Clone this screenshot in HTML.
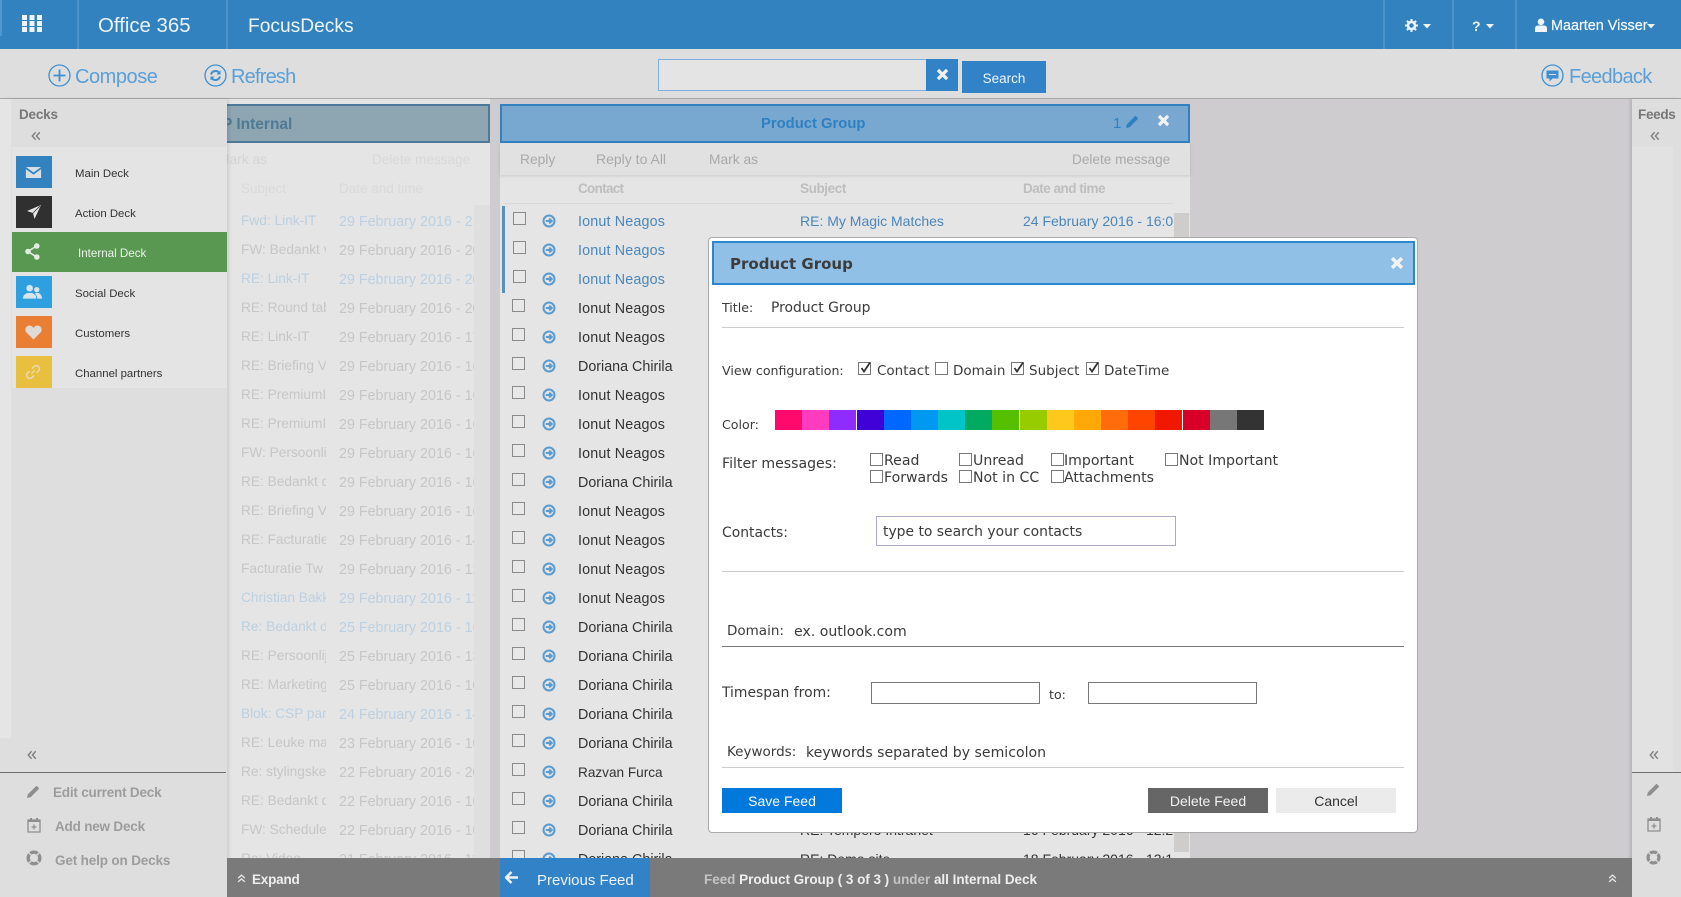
<!DOCTYPE html>
<html><head><meta charset="utf-8"><title>FocusDecks</title>
<style>
*{box-sizing:border-box}
html,body{margin:0;padding:0}
body{width:1681px;height:897px;overflow:hidden;position:relative;background:#cecccf;font-family:"Liberation Sans",sans-serif;color:#333}
.a{position:absolute;white-space:nowrap}
.t{position:absolute;white-space:nowrap;line-height:20px;height:20px;transform:translateY(1px)}
svg{position:absolute;display:block}
.bx{position:absolute;width:13px;height:13px;border:1px solid #8a8a8a;background:#e8e8e8}
.r{font-size:14.3px;color:#333}
.i{letter-spacing:.17px}
.b{color:#4a86bb}
.s14{font-size:14px}
.f{font-size:13.7px;color:#c6c6c6;overflow:hidden}
.d{font-size:14.3px}
.fb{color:#bcd0e2}
.m{position:absolute;white-space:nowrap;line-height:20px;height:20px;font-family:"DejaVu Sans",sans-serif;font-size:12.6px;color:#3a3a3a;transform:translateY(1px)}
.l{font-size:13.9px}
.l2{font-size:14.1px}
.cb{position:absolute;width:13px;height:13px;border:1px solid #777;background:#fff}
.sw{position:absolute;top:410px;height:20px;width:27.2px}
.btn{position:absolute;top:788px;height:25px;width:120px;line-height:27px;text-align:center;font-size:14px}
.s{position:absolute;left:16px;width:36px;height:32px}
.dl{position:absolute;font-size:11.4px;line-height:16px;white-space:nowrap;color:#333;transform:translateY(1px)}
.bl{font-size:14px;font-weight:bold;color:#9c9c9c}
</style></head><body>
<svg width="0" height="0" style="position:absolute">
<defs>
<symbol id="arr" viewBox="0 0 14 14"><circle cx="7" cy="7" r="5.5" fill="none" stroke="#5a9bd0" stroke-width="2"/><path d="M3.8 7H9.5M7.2 4.6 9.8 7 7.2 9.4" fill="none" stroke="#5a9bd0" stroke-width="2"/></symbol>
<symbol id="pen" viewBox="0 0 14 14"><path d="M1 13l.8-3.6L9.8 1.4a1 1 0 0 1 1.4 0l1.4 1.4a1 1 0 0 1 0 1.4L4.6 12.2z" fill="#8e8e8e"/></symbol>
<symbol id="cal" viewBox="0 0 14 16"><path d="M1 3h12v12H1z" fill="none" stroke="#8e8e8e" stroke-width="1.3"/><path d="M3 1h2v4H3zM9 1h2v4H9zM1 3h12v2H1z" fill="#8e8e8e"/><path d="M7 7.5v5M4.5 10h5" stroke="#8e8e8e" stroke-width="1.3"/></symbol>
<symbol id="buoy" viewBox="0 0 16 16"><circle cx="8" cy="8" r="5.8" fill="none" stroke="#8e8e8e" stroke-width="3.4"/><path d="M2.5 2.500l3.200 3.200M13.500 2.500l-3.200 3.200M2.500 13.500l3.200-3.200M13.500 13.500l-3.200-3.200" stroke="#dedede" stroke-width="1.300"/></symbol>
<symbol id="dbl" viewBox="0 0 12 12"><path d="M5.5 1.5 1.5 6l4 4.5M10.5 1.5 6.5 6l4 4.5" fill="none" stroke="#7c7c7c" stroke-width="1.6"/></symbol>
<symbol id="up" viewBox="0 0 12 12"><path d="M1.5 5.5 6 1.5l4.5 4M1.5 10.5 6 6.5l4.5 4" fill="none" stroke="#e8e8e8" stroke-width="1.7"/></symbol>
<symbol id="x" viewBox="0 0 12 12"><path d="M1.8 1.8l8.4 8.4M10.2 1.8l-8.400 8.400" stroke="#f2f2f2" stroke-width="3"/></symbol>
</defs></svg>

<!-- header -->
<div class="a" style="left:0;top:0;width:1681px;height:49px;background:#3282c0"></div>
<div class="a" style="left:0;top:0;width:2px;height:36px;background:#4f97cf"></div>
<div class="a" style="left:77px;top:0;width:2px;height:49px;background:#4b93cb"></div>
<div class="a" style="left:226px;top:0;width:2px;height:49px;background:#4b93cb"></div>
<div class="a" style="left:1383px;top:0;width:2px;height:49px;background:#4b93cb"></div>
<div class="a" style="left:1452px;top:0;width:2px;height:49px;background:#4b93cb"></div>
<div class="a" style="left:1515px;top:0;width:2px;height:49px;background:#4b93cb"></div>
<svg style="left:22px;top:15px" width="20" height="17"><path fill="#eef4fa" d="M0 0h5v5H0zM7.500 0h5v5h-5zM15 0h5v5h-5zM0 6h5v5H0zM7.500 6h5v5h-5zM15 6h5v5h-5zM0 12h5v5H0zM7.500 12h5v5h-5zM15 12h5v5h-5z"/></svg>
<div class="t" style="left:98px;top:15px;font-size:20.400px;color:#eef4fa">Office 365</div>
<div class="t" style="left:248px;top:16px;font-size:19.200px;color:#eef4fa">FocusDecks</div>
<svg style="left:1405px;top:19px" width="13" height="13" viewBox="0 0 14 14"><circle cx="7" cy="7" r="3.800" fill="none" stroke="#eef4fa" stroke-width="2.800"/><path d="M7 0v3M7 11v3M0 7h3M11 7h3M2 2l2 2M10 10l2 2M12 2l-2 2M4 10l-2 2" stroke="#eef4fa" stroke-width="2.200"/></svg>
<svg style="left:1423px;top:24px" width="9" height="5"><path d="M0 0h8L4 4.500z" fill="#eef4fa"/></svg>
<div class="t" style="left:1472px;top:15px;font-size:14px;font-weight:bold;color:#eef4fa">?</div>
<svg style="left:1486px;top:24px" width="9" height="5"><path d="M0 0h8L4 4.500z" fill="#eef4fa"/></svg>
<svg style="left:1535px;top:18px" width="12" height="14" viewBox="0 0 12 14"><circle cx="6" cy="3.800" r="3.300" fill="#eef4fa"/><path d="M0 14V10.500Q0 7.500 3 7.500H9Q12 7.500 12 10.500V14z" fill="#eef4fa"/></svg>
<div class="t" style="left:1551px;top:15px;font-size:14.400px;color:#f4f8fc;-webkit-text-stroke:.2px #f4f8fc">Maarten Visser</div>
<svg style="left:1647px;top:24px" width="9" height="5"><path d="M0 0h8L4 4.500z" fill="#eef4fa"/></svg>

<!-- toolbar -->
<div class="a" style="left:0;top:49px;width:1681px;height:50px;background:#dedede;border-bottom:1px solid #a8a8a8"></div>
<svg style="left:48px;top:64px" width="23" height="23" viewBox="0 0 23 23"><circle cx="11.500" cy="11.500" r="10.500" fill="none" stroke="#3f8fd0" stroke-width="1.300"/><path d="M11.500 5.500v12M5.500 11.500h12" stroke="#3f8fd0" stroke-width="1.800"/></svg>
<div class="t" style="left:75px;top:64px;font-size:20px;line-height:24px;height:24px;color:#5a9fd8;letter-spacing:-.45px">Compose</div>
<svg style="left:204px;top:64px" width="23" height="23" viewBox="0 0 23 23"><circle cx="11.500" cy="11.500" r="10.500" fill="none" stroke="#3f8fd0" stroke-width="1.300"/><path d="M7 10.500a4.700 4.700 0 0 1 8-2l.8.800M16 12.500a4.700 4.700 0 0 1-8 2l-.8-.800" fill="none" stroke="#3f8fd0" stroke-width="2"/><path d="M16.500 6.500v4h-4zM6.500 16.500v-4h4z" fill="#3f8fd0"/></svg>
<div class="t" style="left:231px;top:64px;font-size:20px;line-height:24px;height:24px;color:#5a9fd8;letter-spacing:-.8px">Refresh</div>
<div class="a" style="left:658px;top:59px;width:269px;height:32px;border:1px solid #7db0e0;background:#e4e4e4"></div>
<div class="a" style="left:926px;top:59px;width:32px;height:32px;background:#3282c8"></div>
<svg style="left:936px;top:68px" width="13" height="13"><use href="#x"/></svg>
<div class="a" style="left:962px;top:61px;width:84px;height:32px;background:#3282c8;color:#eef4fa;font-size:13.500px;line-height:35px;text-align:center">Search</div>
<svg style="left:1541px;top:64px" width="23" height="23" viewBox="0 0 23 23"><circle cx="11.500" cy="11.500" r="10.500" fill="none" stroke="#3f8fd0" stroke-width="1.300"/><path d="M5.500 6.500h12v8h-6l-3 3v-3h-3z" fill="#3f8fd0"/><path d="M8 10.500h7" stroke="#dedede" stroke-width="1"/></svg>
<div class="t" style="left:1569px;top:64px;font-size:20px;line-height:24px;height:24px;color:#5a9fd8;letter-spacing:-.65px">Feedback</div>

<!-- column 1 -->
<div class="a" style="left:227px;top:99px;width:263px;height:760px;background:#e5e5e5"></div>
<div class="a" style="left:474px;top:205px;width:16px;height:655px;background:#dfdfdf"></div>
<div class="a" style="left:227px;top:104px;width:263px;height:39px;background:#8ea5b2;border:2px solid #4d7a99;border-left:0"></div>
<div class="t" style="left:227px;top:114px;font-size:15.500px;font-weight:bold;color:#4f7a96;width:70px;overflow:hidden;text-indent:-5px">P Internal</div>
<div class="t" style="left:227px;top:149px;font-size:13.800px;color:#d4d4d4;width:40px;overflow:hidden;text-indent:-9px">Mark as</div>
<div class="t" style="left:372px;top:149px;font-size:13.600px;color:#d8d8d8">Delete message</div>
<div class="t" style="left:241px;top:178px;font-size:13.500px;color:#dadada">Subject</div>
<div class="t" style="left:339px;top:178px;font-size:13.500px;color:#dadada">Date and time</div>
<div class="t f fb" style="left:241px;top:210px;width:85px">Fwd: Link-IT</div><div class="t f d fb" style="left:339px;top:211px;width:135px">29 February 2016 - 21:00</div>
<div class="t f" style="left:241px;top:239px;width:85px">FW: Bedankt voor</div><div class="t f d" style="left:339px;top:240px;width:135px">29 February 2016 - 20:00</div>
<div class="t f fb" style="left:241px;top:268px;width:85px">RE: Link-IT</div><div class="t f d fb" style="left:339px;top:269px;width:135px">29 February 2016 - 20:00</div>
<div class="t f" style="left:241px;top:297px;width:85px">RE: Round table</div><div class="t f d" style="left:339px;top:298px;width:135px">29 February 2016 - 20:00</div>
<div class="t f" style="left:241px;top:326px;width:85px">RE: Link-IT</div><div class="t f d" style="left:339px;top:327px;width:135px">29 February 2016 - 17:00</div>
<div class="t f" style="left:241px;top:355px;width:85px">RE: Briefing Voor</div><div class="t f d" style="left:339px;top:356px;width:135px">29 February 2016 - 16:00</div>
<div class="t f" style="left:241px;top:384px;width:85px">RE: PremiumIT</div><div class="t f d" style="left:339px;top:385px;width:135px">29 February 2016 - 16:00</div>
<div class="t f" style="left:241px;top:413px;width:85px">RE: PremiumIT</div><div class="t f d" style="left:339px;top:414px;width:135px">29 February 2016 - 16:00</div>
<div class="t f" style="left:241px;top:442px;width:85px">FW: Persoonlijk</div><div class="t f d" style="left:339px;top:443px;width:135px">29 February 2016 - 16:00</div>
<div class="t f" style="left:241px;top:471px;width:85px">RE: Bedankt d</div><div class="t f d" style="left:339px;top:472px;width:135px">29 February 2016 - 16:00</div>
<div class="t f" style="left:241px;top:500px;width:85px">RE: Briefing Voor</div><div class="t f d" style="left:339px;top:501px;width:135px">29 February 2016 - 16:00</div>
<div class="t f" style="left:241px;top:529px;width:85px">RE: Facturatie</div><div class="t f d" style="left:339px;top:530px;width:135px">29 February 2016 - 14:00</div>
<div class="t f" style="left:241px;top:558px;width:85px">Facturatie Tw</div><div class="t f d" style="left:339px;top:559px;width:135px">29 February 2016 - 12:00</div>
<div class="t f fb" style="left:241px;top:587px;width:85px">Christian Bakker</div><div class="t f d fb" style="left:339px;top:588px;width:135px">29 February 2016 - 11:00</div>
<div class="t f fb" style="left:241px;top:616px;width:85px">Re: Bedankt d</div><div class="t f d fb" style="left:339px;top:617px;width:135px">25 February 2016 - 16:00</div>
<div class="t f" style="left:241px;top:645px;width:85px">RE: Persoonlijk</div><div class="t f d" style="left:339px;top:646px;width:135px">25 February 2016 - 13:00</div>
<div class="t f" style="left:241px;top:674px;width:85px">RE: Marketing</div><div class="t f d" style="left:339px;top:675px;width:135px">25 February 2016 - 10:00</div>
<div class="t f fb" style="left:241px;top:703px;width:85px">Blok: CSP partner</div><div class="t f d fb" style="left:339px;top:704px;width:135px">24 February 2016 - 14:00</div>
<div class="t f" style="left:241px;top:732px;width:85px">RE: Leuke mail</div><div class="t f d" style="left:339px;top:733px;width:135px">23 February 2016 - 10:00</div>
<div class="t f" style="left:241px;top:761px;width:85px">Re: stylingskeuze</div><div class="t f d" style="left:339px;top:762px;width:135px">22 February 2016 - 20:00</div>
<div class="t f" style="left:241px;top:790px;width:85px">RE: Bedankt d</div><div class="t f d" style="left:339px;top:791px;width:135px">22 February 2016 - 10:00</div>
<div class="t f" style="left:241px;top:819px;width:85px">FW: Schedule</div><div class="t f d" style="left:339px;top:820px;width:135px">22 February 2016 - 10:00</div>
<div class="t f" style="left:241px;top:848px;width:85px">Re: Video</div><div class="t f d" style="left:339px;top:849px;width:135px">21 February 2016 - 11:00</div>

<!-- column 2 -->
<div class="a" style="left:500px;top:143px;width:690px;height:716px;background:#e5e5e5"></div>
<div class="a" style="left:500px;top:104px;width:690px;height:39px;background:#78a8d0;border:2px solid #3282c0"></div>
<div class="t" style="left:761px;top:113px;font-size:14.800px;font-weight:bold;color:#2f80c0">Product Group</div>
<div class="t" style="left:1113px;top:113px;font-size:15px;color:#2f80c0">1</div>
<svg style="left:1125px;top:115px" width="14" height="14" viewBox="0 0 14 14"><path d="M1 13l.8-3.600L9.800 1.400a1 1 0 0 1 1.400 0l1.400 1.400a1 1 0 0 1 0 1.400L4.600 12.200z" fill="#2f80c0"/></svg>
<svg style="left:1157px;top:114px" width="13" height="13"><use href="#x"/></svg>
<div class="a" style="left:500px;top:143px;width:690px;height:32px;background:#e1e1e1;box-shadow:0 1px 3px rgba(0,0,0,.12)"></div>
<div class="t" style="left:520px;top:149px;font-size:13.800px;color:#a9a9a9">Reply</div>
<div class="t" style="left:596px;top:148px;font-size:14px;color:#a9a9a9">Reply to All</div>
<div class="t" style="left:709px;top:149px;font-size:13.800px;color:#a9a9a9">Mark as</div>
<div class="t" style="left:1072px;top:149px;font-size:13.600px;color:#a9a9a9">Delete message</div>
<div class="t" style="left:578px;top:178px;font-size:13.500px;font-weight:bold;color:#bebebe;letter-spacing:-.7px">Contact</div>
<div class="t" style="left:800px;top:178px;font-size:13.500px;font-weight:bold;color:#bebebe;letter-spacing:-.4px">Subject</div>
<div class="t" style="left:1023px;top:178px;font-size:13.500px;font-weight:bold;color:#bebebe;letter-spacing:-.5px">Date and time</div>
<div class="a" style="left:505px;top:203px;width:668px;height:1px;background:#d8d8d8"></div>
<div class="a" style="left:502px;top:206px;width:3px;height:87px;background:#5a8fbf"></div>
<div class="a" style="left:1174px;top:213px;width:15px;height:639px;background:#cfcccc"></div>
<div class="bx" style="left:513px;top:212px"></div><svg style="left:542px;top:214px" width="14" height="14"><use href="#arr"/></svg><div class="t r b i" style="left:578px;top:211px">Ionut Neagos</div>
<div class="t r b s14" style="left:800px;top:210px">RE: My Magic Matches</div><div class="t r b s14" style="left:1023px;top:210px;width:150px;overflow:hidden">24 February 2016 - 16:00</div>
<div class="bx" style="left:513px;top:241px"></div><svg style="left:542px;top:243px" width="14" height="14"><use href="#arr"/></svg><div class="t r b i" style="left:578px;top:240px">Ionut Neagos</div>
<div class="bx" style="left:513px;top:270px"></div><svg style="left:542px;top:272px" width="14" height="14"><use href="#arr"/></svg><div class="t r b i" style="left:578px;top:269px">Ionut Neagos</div>
<div class="bx" style="left:512px;top:299px"></div><svg style="left:542px;top:301px" width="14" height="14"><use href="#arr"/></svg><div class="t r i" style="left:578px;top:298px">Ionut Neagos</div>
<div class="bx" style="left:512px;top:328px"></div><svg style="left:542px;top:330px" width="14" height="14"><use href="#arr"/></svg><div class="t r i" style="left:578px;top:327px">Ionut Neagos</div>
<div class="bx" style="left:512px;top:357px"></div><svg style="left:542px;top:359px" width="14" height="14"><use href="#arr"/></svg><div class="t r" style="left:578px;top:356px">Doriana Chirila</div>
<div class="bx" style="left:512px;top:386px"></div><svg style="left:542px;top:388px" width="14" height="14"><use href="#arr"/></svg><div class="t r i" style="left:578px;top:385px">Ionut Neagos</div>
<div class="bx" style="left:512px;top:415px"></div><svg style="left:542px;top:417px" width="14" height="14"><use href="#arr"/></svg><div class="t r i" style="left:578px;top:414px">Ionut Neagos</div>
<div class="bx" style="left:512px;top:444px"></div><svg style="left:542px;top:446px" width="14" height="14"><use href="#arr"/></svg><div class="t r i" style="left:578px;top:443px">Ionut Neagos</div>
<div class="bx" style="left:512px;top:473px"></div><svg style="left:542px;top:475px" width="14" height="14"><use href="#arr"/></svg><div class="t r" style="left:578px;top:472px">Doriana Chirila</div>
<div class="bx" style="left:512px;top:502px"></div><svg style="left:542px;top:504px" width="14" height="14"><use href="#arr"/></svg><div class="t r i" style="left:578px;top:501px">Ionut Neagos</div>
<div class="bx" style="left:512px;top:531px"></div><svg style="left:542px;top:533px" width="14" height="14"><use href="#arr"/></svg><div class="t r i" style="left:578px;top:530px">Ionut Neagos</div>
<div class="bx" style="left:512px;top:560px"></div><svg style="left:542px;top:562px" width="14" height="14"><use href="#arr"/></svg><div class="t r i" style="left:578px;top:559px">Ionut Neagos</div>
<div class="bx" style="left:512px;top:589px"></div><svg style="left:542px;top:591px" width="14" height="14"><use href="#arr"/></svg><div class="t r i" style="left:578px;top:588px">Ionut Neagos</div>
<div class="bx" style="left:512px;top:618px"></div><svg style="left:542px;top:620px" width="14" height="14"><use href="#arr"/></svg><div class="t r" style="left:578px;top:617px">Doriana Chirila</div>
<div class="bx" style="left:512px;top:647px"></div><svg style="left:542px;top:649px" width="14" height="14"><use href="#arr"/></svg><div class="t r" style="left:578px;top:646px">Doriana Chirila</div>
<div class="bx" style="left:512px;top:676px"></div><svg style="left:542px;top:678px" width="14" height="14"><use href="#arr"/></svg><div class="t r" style="left:578px;top:675px">Doriana Chirila</div>
<div class="bx" style="left:512px;top:705px"></div><svg style="left:542px;top:707px" width="14" height="14"><use href="#arr"/></svg><div class="t r" style="left:578px;top:704px">Doriana Chirila</div>
<div class="bx" style="left:512px;top:734px"></div><svg style="left:542px;top:736px" width="14" height="14"><use href="#arr"/></svg><div class="t r" style="left:578px;top:733px">Doriana Chirila</div>
<div class="bx" style="left:512px;top:763px"></div><svg style="left:542px;top:765px" width="14" height="14"><use href="#arr"/></svg><div class="t r" style="left:578px;top:762px;font-size:13.600px">Razvan Furca</div>
<div class="bx" style="left:512px;top:792px"></div><svg style="left:542px;top:794px" width="14" height="14"><use href="#arr"/></svg><div class="t r" style="left:578px;top:791px">Doriana Chirila</div>
<div class="bx" style="left:512px;top:821px"></div><svg style="left:542px;top:823px" width="14" height="14"><use href="#arr"/></svg><div class="t r" style="left:578px;top:820px">Doriana Chirila</div>
<div class="t r s14" style="left:800px;top:819px">RE: Tempero Intranet</div><div class="t r s14" style="left:1023px;top:819px;width:150px;overflow:hidden">16 February 2016 - 12:20</div>
<div class="bx" style="left:512px;top:850px"></div><svg style="left:542px;top:852px" width="14" height="14"><use href="#arr"/></svg><div class="t r" style="left:578px;top:849px">Doriana Chirila</div>
<div class="t r s14" style="left:800px;top:848px">RE: Demo site</div><div class="t r s14" style="left:1023px;top:848px;width:150px;overflow:hidden">18 February 2016 - 13:10</div>

<!-- left sidebar -->
<div class="a" style="left:0;top:99px;width:227px;height:798px;background:#dedede;box-shadow:2px 0 3px rgba(0,0,0,.1)"></div>
<div class="a" style="left:0;top:99px;width:11px;height:639px;background:#e5e5e5"></div>
<div class="a" style="left:12px;top:147px;width:215px;height:241px;background:#e4e4e4"></div>
<div class="t" style="left:19px;top:104px;font-size:13.500px;font-weight:bold;color:#777;letter-spacing:-.2px">Decks</div>
<svg style="left:31px;top:131px" width="10" height="10"><use href="#dbl"/></svg>
<div class="s" style="top:156px;background:#3282c0"></div>
<svg style="left:25px;top:167px" width="17" height="11" viewBox="0 0 18 13"><path d="M0 0h18L9 6.500zM0 2.500l9 6.500 9-6.500V13H0z" fill="#d6dfe6"/></svg>
<div class="dl" style="left:75px;top:165px">Main Deck</div>
<div class="s" style="top:196px;background:#303030"></div>
<svg style="left:26px;top:204px" width="16" height="16" viewBox="0 0 16 16"><path d="M15 1 1 7l6 2 1.500 6z" fill="#e6e6e6"/><path d="M14 2 7 9" stroke="#303030" stroke-width=".8"/></svg>
<div class="dl" style="left:75px;top:205px">Action Deck</div>
<div class="a" style="left:12px;top:232px;width:215px;height:40px;background:#589850"></div>
<svg style="left:25px;top:243px" width="15" height="17" viewBox="0 0 15 17"><path d="M11.500 3 3 8.500l8.500 5.500" fill="none" stroke="#e4ebe2" stroke-width="1.600"/><circle cx="11.800" cy="3" r="2.800" fill="#e4ebe2"/><circle cx="3" cy="8.500" r="2.800" fill="#e4ebe2"/><circle cx="11.800" cy="14" r="2.800" fill="#e4ebe2"/></svg>
<div class="dl" style="left:78px;top:245px;color:#eef3ec;font-size:11.600px">Internal Deck</div>
<div class="s" style="top:276px;background:#2e9fdf"></div>
<svg style="left:23px;top:284px" width="19" height="16" viewBox="0 0 20 16"><circle cx="7" cy="4" r="3.500" fill="#d6e4ee"/><path d="M0 15c0-3 1-4 3-5l1-1h6l1 1c2 1 3 2 3 5z" fill="#d6e4ee"/><circle cx="14.500" cy="5.500" r="2.800" fill="#d6e4ee"/><path d="M15 15c0-2-1-4-2.500-5l1-1h3c2 1 3.500 3 3.500 6z" fill="#d6e4ee"/></svg>
<div class="dl" style="left:75px;top:285px">Social Deck</div>
<div class="s" style="top:316px;background:#ea7f34"></div>
<svg style="left:25px;top:325px" width="17" height="15" viewBox="0 0 17 15"><path d="M8.500 14.500 1.500 7.500C-1 4.500 1 .5 4.500.5 6.500.5 8 2 8.500 3 9 2 10.500.5 12.500.5 16 .5 18 4.500 15.500 7.500z" fill="#dedad6"/></svg>
<div class="dl" style="left:75px;top:325px">Customers</div>
<div class="s" style="top:356px;background:#e8bf3e"></div>
<svg style="left:25px;top:364px" width="16" height="16" viewBox="0 0 16 16"><path d="M6.500 9.500 9.500 6.500M7 4.500l2-2a2.800 2.800 0 0 1 4.500 4.500l-2 2M9 11.500l-2 2A2.800 2.800 0 0 1 2.500 9l2-2" fill="none" stroke="#e8ddb8" stroke-width="1.300"/></svg>
<div class="dl" style="left:75px;top:365px">Channel partners</div>
<svg style="left:27px;top:750px" width="10" height="10"><use href="#dbl"/></svg>
<div class="a" style="left:0;top:772px;width:226px;height:1px;background:#6e6e6e"></div>
<svg style="left:26px;top:785px" width="14" height="14"><use href="#pen"/></svg>
<div class="t bl" style="left:53px;top:782px;font-size:13.500px;letter-spacing:-.2px">Edit current Deck</div>
<svg style="left:27px;top:817px" width="14" height="16"><use href="#cal"/></svg>
<div class="t bl" style="left:55px;top:816px;font-size:13.500px;letter-spacing:-.2px">Add new Deck</div>
<svg style="left:26px;top:850px" width="16" height="16"><use href="#buoy"/></svg>
<div class="t bl" style="left:55px;top:850px;font-size:13.500px;letter-spacing:-.15px">Get help on Decks</div>

<!-- right sidebar -->
<div class="a" style="left:1632px;top:99px;width:49px;height:798px;background:#dedede;box-shadow:-2px 0 3px rgba(0,0,0,.12)"></div>
<div class="a" style="left:1632px;top:147px;width:41px;height:625px;background:#e2e2e2"></div>
<div class="t" style="left:1638px;top:104px;font-size:13.500px;font-weight:bold;color:#777;letter-spacing:-.3px">Feeds</div>
<svg style="left:1650px;top:131px" width="10" height="10"><use href="#dbl"/></svg>
<svg style="left:1649px;top:750px" width="10" height="10"><use href="#dbl"/></svg>
<div class="a" style="left:1632px;top:772px;width:49px;height:1px;background:#6e6e6e"></div>
<svg style="left:1646px;top:783px" width="14" height="14"><use href="#pen"/></svg>
<svg style="left:1647px;top:816px" width="14" height="16"><use href="#cal"/></svg>
<svg style="left:1646px;top:850px" width="15" height="15"><use href="#buoy"/></svg>

<!-- bottom bar -->
<div class="a" style="left:227px;top:858px;width:1405px;height:39px;background:#7a7a7a"></div>
<svg style="left:237px;top:874px" width="9" height="9"><use href="#up"/></svg>
<div class="t" style="left:252px;top:869px;font-size:13.500px;font-weight:bold;color:#eee;letter-spacing:-.2px">Expand</div>
<div class="a" style="left:500px;top:858px;width:150px;height:39px;background:#3282c8"></div>
<svg style="left:505px;top:871px" width="13" height="13" viewBox="0 0 13 13"><path d="M6.500 1 1 6.500 6.500 12M1.500 6.500H13" fill="none" stroke="#f0f0f0" stroke-width="2.400"/></svg>
<div class="t" style="left:537px;top:870px;font-size:15px;color:#eef4fa">Previous Feed</div>
<div class="t" style="left:704px;top:869px;font-size:13.500px;font-weight:bold;color:#c4c4c4;letter-spacing:-.03px">Feed <span style="color:#eee">Product Group ( 3 of 3 )</span> under <span style="color:#eee">all Internal Deck</span></div>
<svg style="left:1608px;top:874px" width="9" height="9"><use href="#up"/></svg>

<!-- modal -->
<div class="a" style="left:708px;top:237px;width:710px;height:596px;background:#fff;border:1px solid #aaa;border-radius:4px"></div>
<div class="a" style="left:712px;top:241px;width:703px;height:44px;background:#90c0e6;border:2px solid #2c86d0"></div>
<div class="t" style="left:730px;top:253px;font-family:'DejaVu Sans',sans-serif;font-size:15px;font-weight:bold;color:#3c3c3c">Product Group</div>
<svg style="left:1390px;top:256px" width="14" height="14"><use href="#x"/></svg>
<div class="m" style="left:722px;top:297px">Title:</div>
<div class="m l" style="left:771px;top:297px">Product Group</div>
<div class="a" style="left:722px;top:327px;width:682px;height:1px;background:#ccc"></div>
<div class="m" style="left:722px;top:360px">View configuration:</div>
<div class="cb" style="left:858px;top:362px"></div><svg style="left:859px;top:361px" width="13" height="13"><path d="M2.500 7 5 10.500 11 1.500" fill="none" stroke="#333" stroke-width="1.800"/></svg>
<div class="m" style="left:877px;top:360px;font-size:13.500px">Contact</div>
<div class="cb" style="left:935px;top:362px"></div>
<div class="m" style="left:953px;top:360px;font-size:13.500px">Domain</div>
<div class="cb" style="left:1011px;top:362px"></div><svg style="left:1012px;top:361px" width="13" height="13"><path d="M2.500 7 5 10.500 11 1.500" fill="none" stroke="#333" stroke-width="1.800"/></svg>
<div class="m" style="left:1029px;top:360px;font-size:13.500px">Subject</div>
<div class="cb" style="left:1086px;top:362px"></div><svg style="left:1087px;top:361px" width="13" height="13"><path d="M2.500 7 5 10.500 11 1.500" fill="none" stroke="#333" stroke-width="1.800"/></svg>
<div class="m" style="left:1104px;top:360px;font-size:13.500px">DateTime</div>
<div class="m" style="left:722px;top:414px">Color:</div>
<div class="sw" style="left:775px;background:#ff0a6c"></div>
<div class="sw" style="left:802px;background:#ff3cc0"></div>
<div class="sw" style="left:829px;background:#8e2bff"></div>
<div class="sw" style="left:857px;background:#4000d8"></div>
<div class="sw" style="left:884px;background:#0068ff"></div>
<div class="sw" style="left:911px;background:#0098f0"></div>
<div class="sw" style="left:938px;background:#00c4c8"></div>
<div class="sw" style="left:965px;background:#00aa60"></div>
<div class="sw" style="left:992px;background:#55c000"></div>
<div class="sw" style="left:1020px;background:#96cc00"></div>
<div class="sw" style="left:1047px;background:#ffc81c"></div>
<div class="sw" style="left:1074px;background:#ffa808"></div>
<div class="sw" style="left:1101px;background:#ff6c0c"></div>
<div class="sw" style="left:1128px;background:#ff4400"></div>
<div class="sw" style="left:1155px;background:#f01800"></div>
<div class="sw" style="left:1183px;background:#d80028"></div>
<div class="sw" style="left:1210px;background:#777"></div>
<div class="sw" style="left:1237px;width:27px;background:#333"></div>
<div class="m l2" style="left:722px;top:453px">Filter messages:</div>
<div class="cb" style="left:870px;top:453px"></div><div class="m l2" style="left:884px;top:450px">Read</div>
<div class="cb" style="left:959px;top:453px"></div><div class="m l2" style="left:973px;top:450px">Unread</div>
<div class="cb" style="left:1051px;top:453px"></div><div class="m l2" style="left:1064px;top:450px">Important</div>
<div class="cb" style="left:1165px;top:453px"></div><div class="m l2" style="left:1179px;top:450px">Not Important</div>
<div class="cb" style="left:870px;top:470px"></div><div class="m l2" style="left:884px;top:467px">Forwards</div>
<div class="cb" style="left:959px;top:470px"></div><div class="m l2" style="left:973px;top:467px">Not in CC</div>
<div class="cb" style="left:1051px;top:470px"></div><div class="m l2" style="left:1064px;top:467px">Attachments</div>
<div class="m l" style="left:722px;top:522px">Contacts:</div>
<div class="a" style="left:876px;top:516px;width:300px;height:30px;border:1px solid #aaaac4;background:#fff"></div>
<div class="m l" style="left:883px;top:521px">type to search your contacts</div>
<div class="a" style="left:722px;top:571px;width:682px;height:1px;background:#ccc"></div>
<div class="m" style="left:727px;top:620px;font-size:13.500px">Domain:</div>
<div class="m l2" style="left:794px;top:621px">ex. outlook.com</div>
<div class="a" style="left:722px;top:646px;width:682px;height:1px;background:#777"></div>
<div class="m l" style="left:722px;top:682px">Timespan from:</div>
<div class="a" style="left:871px;top:682px;width:169px;height:22px;border:1px solid #777;background:#fff"></div>
<div class="m" style="left:1049px;top:684px">to:</div>
<div class="a" style="left:1088px;top:682px;width:169px;height:22px;border:1px solid #777;background:#fff"></div>
<div class="m" style="left:727px;top:741px;font-size:13.500px">Keywords:</div>
<div class="m l2" style="left:806px;top:742px">keywords separated by semicolon</div>
<div class="a" style="left:722px;top:767px;width:682px;height:1px;background:#ccc"></div>
<div class="btn" style="left:722px;background:#0078dc;color:#fff">Save Feed</div>
<div class="btn" style="left:1148px;background:#666;color:#f2f2f2">Delete Feed</div>
<div class="btn" style="left:1276px;background:#ebebeb;color:#333">Cancel</div>
</body></html>
